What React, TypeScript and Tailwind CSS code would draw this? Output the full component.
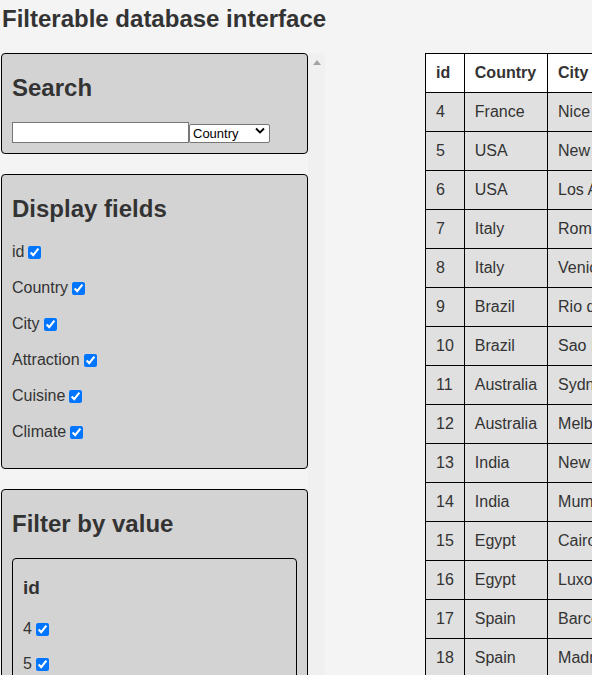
import { useState } from 'react'

type Row = {
  id: number
  Country: string
  City: string
  Attraction: string
  Cuisine: string
  Climate: string
}

const FIELDS: (keyof Row)[] = ['id', 'Country', 'City', 'Attraction', 'Cuisine', 'Climate']

const ROWS: Row[] = [
  { id: 4, Country: 'France', City: 'Nice', Attraction: 'Promenade des Anglais', Cuisine: 'French', Climate: 'Mediterranean' },
  { id: 5, Country: 'USA', City: 'New York', Attraction: 'Statue of Liberty', Cuisine: 'American', Climate: 'Temperate' },
  { id: 6, Country: 'USA', City: 'Los Angeles', Attraction: 'Hollywood', Cuisine: 'American', Climate: 'Mediterranean' },
  { id: 7, Country: 'Italy', City: 'Rome', Attraction: 'Colosseum', Cuisine: 'Italian', Climate: 'Mediterranean' },
  { id: 8, Country: 'Italy', City: 'Venice', Attraction: 'Grand Canal', Cuisine: 'Italian', Climate: 'Humid subtropical' },
  { id: 9, Country: 'Brazil', City: 'Rio de Janeiro', Attraction: 'Christ the Redeemer', Cuisine: 'Brazilian', Climate: 'Tropical' },
  { id: 10, Country: 'Brazil', City: 'Sao Paulo', Attraction: 'Ibirapuera Park', Cuisine: 'Brazilian', Climate: 'Subtropical' },
  { id: 11, Country: 'Australia', City: 'Sydney', Attraction: 'Opera House', Cuisine: 'Australian', Climate: 'Temperate' },
  { id: 12, Country: 'Australia', City: 'Melbourne', Attraction: 'Federation Square', Cuisine: 'Australian', Climate: 'Temperate' },
  { id: 13, Country: 'India', City: 'New Delhi', Attraction: 'Red Fort', Cuisine: 'Indian', Climate: 'Semi-arid' },
  { id: 14, Country: 'India', City: 'Mumbai', Attraction: 'Gateway of India', Cuisine: 'Indian', Climate: 'Tropical' },
  { id: 15, Country: 'Egypt', City: 'Cairo', Attraction: 'Pyramids of Giza', Cuisine: 'Egyptian', Climate: 'Desert' },
  { id: 16, Country: 'Egypt', City: 'Luxor', Attraction: 'Karnak Temple', Cuisine: 'Egyptian', Climate: 'Desert' },
  { id: 17, Country: 'Spain', City: 'Barcelona', Attraction: 'Sagrada Familia', Cuisine: 'Spanish', Climate: 'Mediterranean' },
  { id: 18, Country: 'Spain', City: 'Madrid', Attraction: 'Prado Museum', Cuisine: 'Spanish', Climate: 'Continental' },
]

const boxCls = 'w-[307px] border border-black rounded-[4px] bg-[#d3d3d3] px-[10px]'
const h2Cls = 'text-[24px] leading-[28px] font-bold'

function CheckRow({ label, checked, onChange }: { label: string; checked: boolean; onChange: () => void }) {
  return (
    <label className="flex items-center gap-[4px] h-[18px] text-[16px] leading-[18px]">
      {label}
      <input type="checkbox" checked={checked} onChange={onChange} className="w-[13px] h-[13px] accent-[#0075ff]" />
    </label>
  )
}

export default function App() {
  const [shown, setShown] = useState<Record<string, boolean>>(
    Object.fromEntries(FIELDS.map(f => [f, true]))
  )
  const [values, setValues] = useState<Record<string, boolean>>({})
  const [query, setQuery] = useState('')
  const [searchField, setSearchField] = useState<keyof Row>('Country')

  const toggleValue = (k: string) => setValues(v => ({ ...v, [k]: v[k] === false ? true : false }))

  const cols = FIELDS.filter(f => shown[f])
  const rows = ROWS.filter(r => {
    if (query && !String(r[searchField]).toLowerCase().includes(query.toLowerCase())) return false
    return FIELDS.every(f => values[`${f}:${r[f]}`] !== false)
  })

  return (
    <div className="h-screen w-screen overflow-hidden bg-[#f4f4f4] text-[#333] font-['Liberation_Sans',Arial,sans-serif]">
      <h1 className="pl-[2px] pt-[5px] text-[24px] leading-[28px] font-bold">Filterable database interface</h1>

      <div className="mt-[20px] flex items-start">
        {/* sidebar + its scrollbar track */}
        <div className="flex h-[622px] shrink-0">
          <div className="w-[308px] h-full overflow-y-scroll pl-[1px] [scrollbar-width:none]">
            <div className={`${boxCls} pt-[20px] pb-[10px]`}>
              <h2 className={h2Cls}>Search</h2>
              <div className="mt-[20px] flex items-center h-[21px]">
                <input
                  value={query}
                  onChange={e => setQuery(e.target.value)}
                  className="w-[177px] h-[21px] bg-white border border-[#767676] px-[2px] text-[13px] outline-none"
                />
                <div className="relative">
                  <select
                    value={searchField}
                    onChange={e => setSearchField(e.target.value as keyof Row)}
                    className="appearance-none w-[81px] h-[19px] bg-white border border-[#767676] rounded-[2px] pl-[3px] text-[13px] leading-[15px] text-black"
                  >
                    {FIELDS.map(f => (
                      <option key={f} value={f}>{f}</option>
                    ))}
                  </select>
                  <svg className="pointer-events-none absolute right-[5px] top-[6px]" width="10" height="7" viewBox="0 0 10 7">
                    <path d="M1 1.5 L5 5.5 L9 1.5" fill="none" stroke="#000" strokeWidth="1.8" />
                  </svg>
                </div>
              </div>
            </div>

            <div className={`${boxCls} mt-[20px] pt-[20px] pb-[27px]`}>
              <h2 className={h2Cls}>Display fields</h2>
              <div className="mt-[20px] flex flex-col gap-[18px]">
                {FIELDS.map(f => (
                  <CheckRow key={f} label={f} checked={shown[f]} onChange={() => setShown(s => ({ ...s, [f]: !s[f] }))} />
                ))}
              </div>
            </div>

            <div className={`${boxCls} mt-[20px] pt-[20px] pb-[27px] mb-[10px]`}>
              <h2 className={h2Cls}>Filter by value</h2>
              <div className="mt-[20px] flex flex-col gap-[20px]">
                {FIELDS.map(f => {
                  const uniq = Array.from(new Set(ROWS.map(r => String(r[f]))))
                  return (
                    <div key={f} className="border border-black rounded-[4px] px-[10px] pt-[18px] pb-[27px]">
                      <h3 className="text-[19px] leading-[22px] font-bold">{f}</h3>
                      <div className="mt-[21px] flex flex-col gap-[17px]">
                        {uniq.map(v => (
                          <CheckRow
                            key={v}
                            label={v}
                            checked={values[`${f}:${v}`] !== false}
                            onChange={() => toggleValue(`${f}:${v}`)}
                          />
                        ))}
                      </div>
                    </div>
                  )
                })}
              </div>
            </div>
          </div>
          <div className="w-[17px] h-full bg-[#f0f0f0] flex justify-center pt-[7px]">
            <svg width="8" height="5" viewBox="0 0 8 5">
              <path d="M4 0 L8 5 L0 5 Z" fill="#a3a3a3" />
            </svg>
          </div>
        </div>

        {/* table */}
        <table className="ml-[100px] shrink-0 border-collapse whitespace-nowrap text-[16px] leading-[18px]">
          <thead>
            <tr className="bg-white">
              {cols.map(c => (
                <th key={c} className="border border-black px-[10px] py-[10px] text-left font-bold">{c}</th>
              ))}
            </tr>
          </thead>
          <tbody>
            {rows.map(r => (
              <tr key={r.id} className="bg-[#e0e0e0]">
                {cols.map(c => (
                  <td key={c} className="border border-black px-[10px] py-[10px]">{r[c]}</td>
                ))}
              </tr>
            ))}
          </tbody>
        </table>
      </div>
    </div>
  )
}
